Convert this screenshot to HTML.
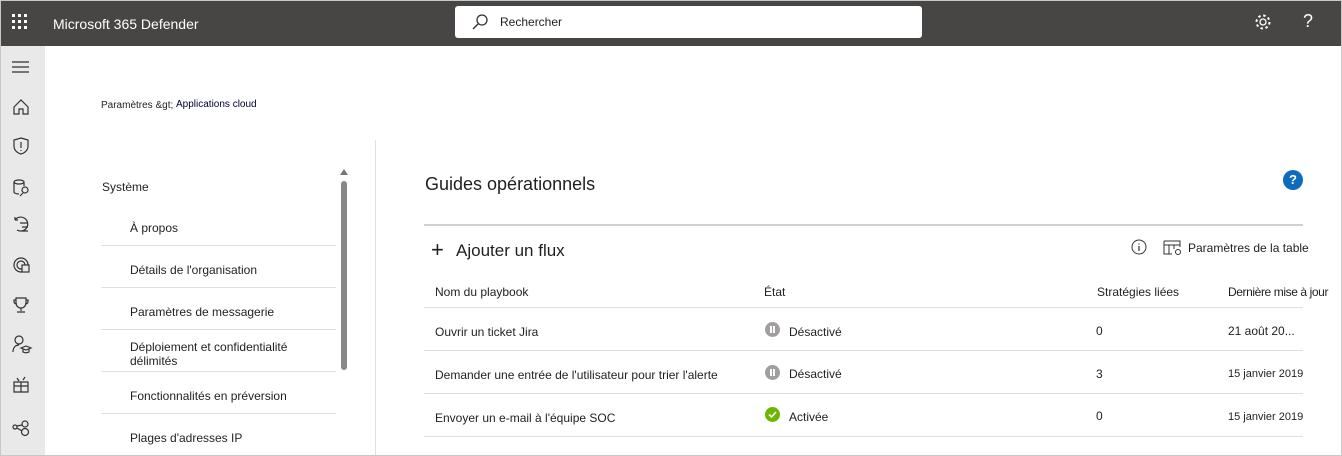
<!DOCTYPE html><html><head><meta charset="utf-8"><style>
*{margin:0;padding:0;box-sizing:border-box}
body{width:1342px;height:456px;overflow:hidden;background:#fff;font-family:"Liberation Sans",sans-serif;color:#201f1e;position:relative}
.a{position:absolute}
.top{left:0;top:0;width:1342px;height:46px;background:#484644}
.side{left:0;top:46px;width:45px;height:410px;background:#e9e9e9}
.t{position:absolute;font-size:12px;white-space:nowrap}
.sep{position:absolute;height:1px;background:#e1dfdd}
svg{position:absolute}
.p{position:absolute;width:15px;height:15px;border-radius:50%;background:#a19f9d}
.p:before,.p:after{content:"";position:absolute;top:4px;width:2px;height:7px;background:#fff}
.p:before{left:5px}.p:after{left:8px}
</style></head><body>
<div class="a top"></div>
<svg style="left:11px;top:13px" width="18" height="18"><g fill="#fff"><rect x="1" y="1" width="3" height="3"/><rect x="7" y="1" width="3" height="3"/><rect x="13" y="1" width="3" height="3"/><rect x="1" y="7" width="3" height="3"/><rect x="7" y="7" width="3" height="3"/><rect x="13" y="7" width="3" height="3"/><rect x="1" y="13" width="3" height="3"/><rect x="7" y="13" width="3" height="3"/><rect x="13" y="13" width="3" height="3"/></g></svg>
<div class="t" style="left:53px;top:16px;color:#fff;font-size:14px">Microsoft 365 Defender</div>
<div class="a" style="left:455px;top:6px;width:467px;height:32px;background:#fff;border-radius:3px"></div>
<svg style="left:471px;top:13px" width="18" height="18"><circle cx="11" cy="7" r="5" fill="none" stroke="#333" stroke-width="1.3"/><path d="M7 11L2 16" stroke="#333" stroke-width="1.4"/></svg>
<div class="t" style="left:500px;top:15px;font-size:12px">Rechercher</div>
<svg style="left:1254px;top:13px" width="18" height="18"><circle cx="9" cy="9" r="3" fill="none" stroke="#fff" stroke-width="1.3"/><circle cx="9" cy="9" r="6.5" fill="none" stroke="#fff" stroke-width="2" stroke-dasharray="2.5 2.6"/></svg>
<div class="t" style="left:1303px;top:11px;color:#fff;font-size:18px">?</div>
<div class="a side"></div>
<svg style="left:11px;top:60px" width="22" height="380" fill="none" stroke="#333" stroke-width="1.2">
<path d="M1 2h17M1 7h17M1 12h17"/>
<path d="M3 47l7-7 7 7v7h-5v-5h-4v5H3z"/>
<path d="M10 78l7 2v6c0 4-3 7-7 8-4-1-7-4-7-8v-6z M10 82v6M10 90v1"/>
<ellipse cx="8" cy="122" rx="5" ry="2"/><path d="M3 122v10c0 1 2 2 5 2M13 122v4"/><circle cx="14" cy="130" r="3"/><path d="M12 133l-3 3"/>
<path d="M4 160a7 7 0 1 1 2 10M4 160v-3M4 160h3M9 163h8M11 167h6M9 171h8"/>
<circle cx="10" cy="205" r="7"/><circle cx="10" cy="205" r="4"/><rect x="11" y="205" width="7" height="7" fill="#e9e9e9"/>
<path d="M5 238h10v5a5 5 0 0 1-10 0zM5 240H3v2a3 3 0 0 0 3 2M15 240h2v2a3 3 0 0 1-3 2M10 248v3M6 252h8"/>
<circle cx="8" cy="280" r="4"/><path d="M2 292c0-5 3-7 6-7"/><path d="M10 288l5-2 5 2-5 2zM12 289v3c2 1 4 1 6 0v-3"/>
<path d="M3 322h14v10H3zM3 326h14M10 322v10M6 318l2 3M14 317l-2 3"/>
<circle cx="4" cy="367" r="2"/><circle cx="14" cy="364" r="3"/><circle cx="14" cy="372" r="3.5"/><path d="M6 366l5-1M6 368l5 3"/>
</svg>
<div class="t" style="left:101px;top:100px;font-size:10px">Paramètres &amp;gt;</div>
<div class="t" style="left:176px;top:99px;font-size:10px;color:#003">Applications cloud</div>
<div class="t" style="left:102px;top:180px">Système</div>
<div class="t" style="left:130px;top:221px">À propos</div>
<div class="sep" style="left:101px;top:245px;width:235px"></div>
<div class="t" style="left:130px;top:263px">Détails de l'organisation</div>
<div class="sep" style="left:101px;top:287px;width:235px"></div>
<div class="t" style="left:130px;top:305px">Paramètres de messagerie</div>
<div class="sep" style="left:101px;top:329px;width:235px"></div>
<div class="t" style="left:130px;top:340px;line-height:14px">Déploiement et confidentialité<br>délimités</div>
<div class="sep" style="left:101px;top:371px;width:235px"></div>
<div class="t" style="left:130px;top:389px">Fonctionnalités en préversion</div>
<div class="sep" style="left:101px;top:413px;width:235px"></div>
<div class="t" style="left:130px;top:431px">Plages d'adresses IP</div>
<svg style="left:339px;top:168px" width="10" height="8"><path d="M1 7L5 1 9 7z" fill="#777"/></svg>
<div class="a" style="left:341px;top:181px;width:6px;height:189px;background:#8a8886;border-radius:3px"></div>
<div class="a" style="left:375px;top:140px;width:1px;height:316px;background:#e1dfdd"></div>
<div class="t" style="left:425px;top:174px;font-size:18px">Guides opérationnels</div>
<div class="a" style="left:1283px;top:170px;width:20px;height:20px;border-radius:50%;background:#0f6cbd;color:#fff;font-size:13px;font-weight:bold;text-align:center;line-height:20px">?</div>
<div class="a" style="left:424px;top:224px;width:879px;height:2px;background:#d2d0ce"></div>
<div class="t" style="left:431px;top:237px;font-size:22px;font-weight:300">+</div>
<div class="t" style="left:456px;top:241px;font-size:17px">Ajouter un flux</div>
<svg style="left:1131px;top:239px" width="16" height="16"><circle cx="8" cy="8" r="7" fill="none" stroke="#333"/><path d="M8 7v5M8 4.5v1" stroke="#333" stroke-width="1.2"/></svg>
<svg style="left:1163px;top:240px" width="20" height="16" fill="none" stroke="#333"><path d="M1 1h16v6M1 1v13h8M1 5h16M6 5v9M11 5v4"/><circle cx="15" cy="12" r="2.5"/></svg>
<div class="t" style="left:1188px;top:241px">Paramètres de la table</div>
<div class="t" style="left:435px;top:285px">Nom du playbook</div>
<div class="t" style="left:764px;top:285px">État</div>
<div class="t" style="left:1097px;top:285px">Stratégies liées</div>
<div class="t" style="left:1228px;top:285px;letter-spacing:-0.4px">Dernière mise à jour</div>
<div class="sep" style="left:424px;top:307px;width:879px"></div>
<div class="t" style="left:435px;top:325px">Ouvrir un ticket Jira</div>
<div class="p" style="left:765px;top:322px"></div>
<div class="t" style="left:789px;top:325px">Désactivé</div>
<div class="t" style="left:1096px;top:324px">0</div>
<div class="t" style="left:1228px;top:324px">21 août 20...</div>
<div class="sep" style="left:424px;top:350px;width:879px"></div>
<div class="t" style="left:435px;top:368px">Demander une entrée de l'utilisateur pour trier l'alerte</div>
<div class="p" style="left:765px;top:365px"></div>
<div class="t" style="left:789px;top:367px">Désactivé</div>
<div class="t" style="left:1096px;top:367px">3</div>
<div class="t" style="left:1228px;top:368px;font-size:11px">15 janvier 2019</div>
<div class="sep" style="left:424px;top:393px;width:879px"></div>
<div class="t" style="left:435px;top:411px">Envoyer un e-mail à l'équipe SOC</div>
<div class="a" style="left:765px;top:407px;width:15px;height:15px;border-radius:50%;background:#6bb700"></div>
<svg style="left:765px;top:407px" width="15" height="15"><path d="M4 7.5l2.5 2.5 4.5-5" stroke="#fff" stroke-width="1.6" fill="none"/></svg>
<div class="t" style="left:789px;top:410px">Activée</div>
<div class="t" style="left:1096px;top:409px">0</div>
<div class="t" style="left:1228px;top:411px;font-size:11px">15 janvier 2019</div>
<div class="sep" style="left:424px;top:436px;width:879px"></div>
<div class="a" style="left:0;top:0;width:1342px;height:456px;border:1px solid #c8c8c8;pointer-events:none"></div>
</body></html>
